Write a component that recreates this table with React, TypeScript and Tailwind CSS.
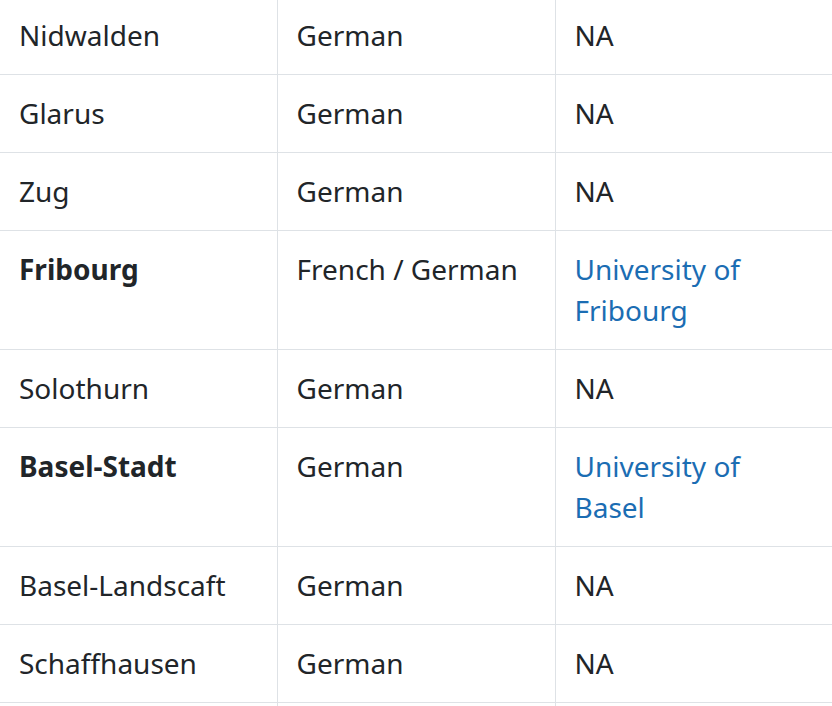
const rows: { canton: string; lang: string; uni?: string; bold?: boolean }[] = [
  { canton: "Nidwalden", lang: "German" },
  { canton: "Glarus", lang: "German" },
  { canton: "Zug", lang: "German" },
  { canton: "Fribourg", lang: "French / German", uni: "University of Fribourg", bold: true },
  { canton: "Solothurn", lang: "German" },
  { canton: "Basel-Stadt", lang: "German", uni: "University of Basel", bold: true },
  { canton: "Basel-Landscaft", lang: "German" },
  { canton: "Schaffhausen", lang: "German" },
];

export default function App() {
  return (
    <div className="h-[706px] w-[832px] overflow-hidden bg-white">
      <table
        className="-mt-[4px] w-[832px] table-fixed border-collapse text-[28px] leading-[41px] text-[#212529]"
        style={{ fontFamily: '"Noto Sans", "Open Sans", sans-serif' }}
      >
        <colgroup>
          <col className="w-[277px]" />
          <col className="w-[278px]" />
          <col />
        </colgroup>
        <tbody>
          {rows.map((r, i) => (
            <tr key={i} className="border-t border-[#dee2e6]">
              <td className={"px-[19px] py-[18px] align-top " + (r.bold ? "font-bold" : "")}>
                {r.canton}
              </td>
              <td className="border-l border-[#dee2e6] px-[19px] py-[18px] align-top">{r.lang}</td>
              <td className="border-l border-[#dee2e6] px-[19px] py-[18px] align-top">
                {r.uni ? (
                  <a href="#" className="block w-[190px] text-[#1b6db3]">
                    {r.uni}
                  </a>
                ) : (
                  "NA"
                )}
              </td>
            </tr>
          ))}
          <tr className="border-t border-[#dee2e6]">
            <td className="h-[78px]"></td>
            <td className="border-l border-[#dee2e6]"></td>
            <td className="border-l border-[#dee2e6]"></td>
          </tr>
        </tbody>
      </table>
    </div>
  );
}
